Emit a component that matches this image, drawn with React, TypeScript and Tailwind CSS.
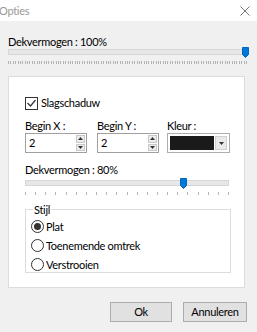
import React from "react";

const font = { fontFamily: 'Lato, "Noto Sans", sans-serif' };

function Ticks({ count, width }: { count: number; width: number }) {
  const xs = Array.from({ length: count }, (_, i) => Math.round((i * (width - 1)) / (count - 1)) + 0.5);
  return (
    <svg width={width} height={4} className="block">
      {xs.map((x, i) => (
        <line key={i} x1={x} x2={x} y1={0} y2={3} stroke="#b4b4b4" strokeWidth={1} />
      ))}
    </svg>
  );
}

function Thumb() {
  return (
    <svg width={7} height={11} className="block">
      <path d="M0.5 0.5 H6.5 V7.5 L3.5 10.5 L0.5 7.5 Z" fill="#0078d7" stroke="#0067c0" />
    </svg>
  );
}

function Slider({ width, pos, ticks }: { width: number; pos: number; ticks: number }) {
  return (
    <div className="flex flex-col" style={{ width }}>
      <div className="relative h-[12px]">
        <div className="mt-[2px] h-[6px] w-full border border-[#d6d6d6] bg-[#e7e7e7]" />
        <div className="absolute top-0" style={{ left: pos }}>
          <Thumb />
        </div>
      </div>
      <div className="mt-[2px]">
        <Ticks count={ticks} width={width} />
      </div>
    </div>
  );
}

function SpinBox({ value }: { value: string }) {
  return (
    <div className="flex h-[20px] w-[62px] border border-[#a0a0a0] bg-white">
      <div className="flex-1 pl-[3px] text-[11px] leading-[18px] text-black">{value}</div>
      <div className="flex w-[11px] flex-col gap-[1px] p-[1px]">
        <div className="flex flex-1 items-center justify-center border border-[#c9c9c9] bg-[#ececec]">
          <svg width={5} height={3}><path d="M0 3 L2.5 0 L5 3 Z" fill="#333" /></svg>
        </div>
        <div className="flex flex-1 items-center justify-center border border-[#c9c9c9] bg-[#ececec]">
          <svg width={5} height={3}><path d="M0 0 L2.5 3 L5 0 Z" fill="#333" /></svg>
        </div>
      </div>
    </div>
  );
}

function Radio({ checked, label }: { checked?: boolean; label: string }) {
  return (
    <div className="flex h-[19px] items-center gap-[2px]">
      <div className="flex h-[13px] w-[13px] items-center justify-center rounded-full border border-[#333] bg-white">
        {checked && <div className="h-[7px] w-[7px] rounded-full bg-[#333]" />}
      </div>
      <span className="text-[11px] leading-[16px] tracking-[-0.3px] text-black">{label}</span>
    </div>
  );
}

export default function App() {
  return (
    <div className="h-[332px] w-[257px] overflow-hidden bg-[#f0f0f0] tracking-[-0.3px]" style={font}>
      <div className="flex h-[21px] items-center justify-between bg-white">
        <span className="ml-[-1px] text-[11px] leading-[16px] text-[#999]">Opties</span>
        <svg width={10} height={10} className="mr-[7px]">
          <path d="M0.5 0.5 L9.5 9.5 M9.5 0.5 L0.5 9.5" stroke="#777" strokeWidth={1} />
        </svg>
      </div>
      <div className="flex flex-col pl-[8px] pr-[10px] pt-[13px]">
        <div className="h-[16px] text-[11px] leading-[16px] text-black">Dekvermogen : 100%</div>
        <div className="mt-[-3px]">
          <Slider width={239} pos={234} ticks={101} />
        </div>
        <div className="mt-[11px] flex h-[212px] w-[237px] flex-col border border-[#dcdcdc] bg-white pl-[16px] pt-[19px]">
          <div className="flex h-[14px] items-center gap-[3px]">
            <div className="flex h-[13px] w-[13px] items-center justify-center border border-[#333] bg-white">
              <svg width={9} height={8}>
                <path d="M0.5 4 L3.5 7 L8.5 1" stroke="#333" strokeWidth={1.2} fill="none" />
              </svg>
            </div>
            <span className="text-[11px] leading-[16px] text-black">Slagschaduw</span>
          </div>
          <div className="mt-[9px] flex gap-[10px]">
            <div className="flex flex-col">
              <span className="h-[14px] text-[11px] leading-[14px] text-black">Begin X :</span>
              <SpinBox value="2" />
            </div>
            <div className="flex flex-col">
              <span className="h-[14px] text-[11px] leading-[14px] text-black">Begin Y :</span>
              <SpinBox value="2" />
            </div>
            <div className="ml-[-2px] flex flex-col">
              <span className="h-[14px] text-[11px] leading-[14px] text-black">Kleur :</span>
              <div className="flex h-[20px] w-[63px] border border-[#adadad] bg-white p-[2px]">
                <div className="flex-1 bg-[#1a1a1a]" />
                <div className="ml-[1px] flex w-[12px] items-center justify-center border border-[#d0d0d0] bg-[#e9e9e9]">
                  <svg width={5} height={3}><path d="M0 0 L2.5 3 L5 0 Z" fill="#333" /></svg>
                </div>
              </div>
            </div>
          </div>
          <div className="mt-[9px] h-[16px] text-[11px] leading-[16px] text-black">Dekvermogen : 80%</div>
          <div className="mt-[0px]">
            <Slider width={204} pos={155} ticks={21} />
          </div>
          <div className="relative mt-[13px] h-[64px] w-[206px] border border-[#dcdcdc] pl-[5px] pt-[7px]">
            <span className="absolute left-[7px] top-[-8px] bg-white px-[1px] text-[11px] leading-[16px] text-black">Stijl</span>
            <Radio checked label="Plat" />
            <Radio label="Toenemende omtrek" />
            <Radio label="Verstrooien" />
          </div>
        </div>
        <div className="mt-[14px] flex justify-end gap-[11px]">
          <button className="h-[20px] w-[62px] border border-[#adadad] bg-[#e1e1e1] text-[11px] leading-[16px] text-black">Ok</button>
          <button className="h-[20px] w-[64px] border border-[#adadad] bg-[#e1e1e1] text-[11px] leading-[16px] text-black">Annuleren</button>
        </div>
      </div>
    </div>
  );
}
